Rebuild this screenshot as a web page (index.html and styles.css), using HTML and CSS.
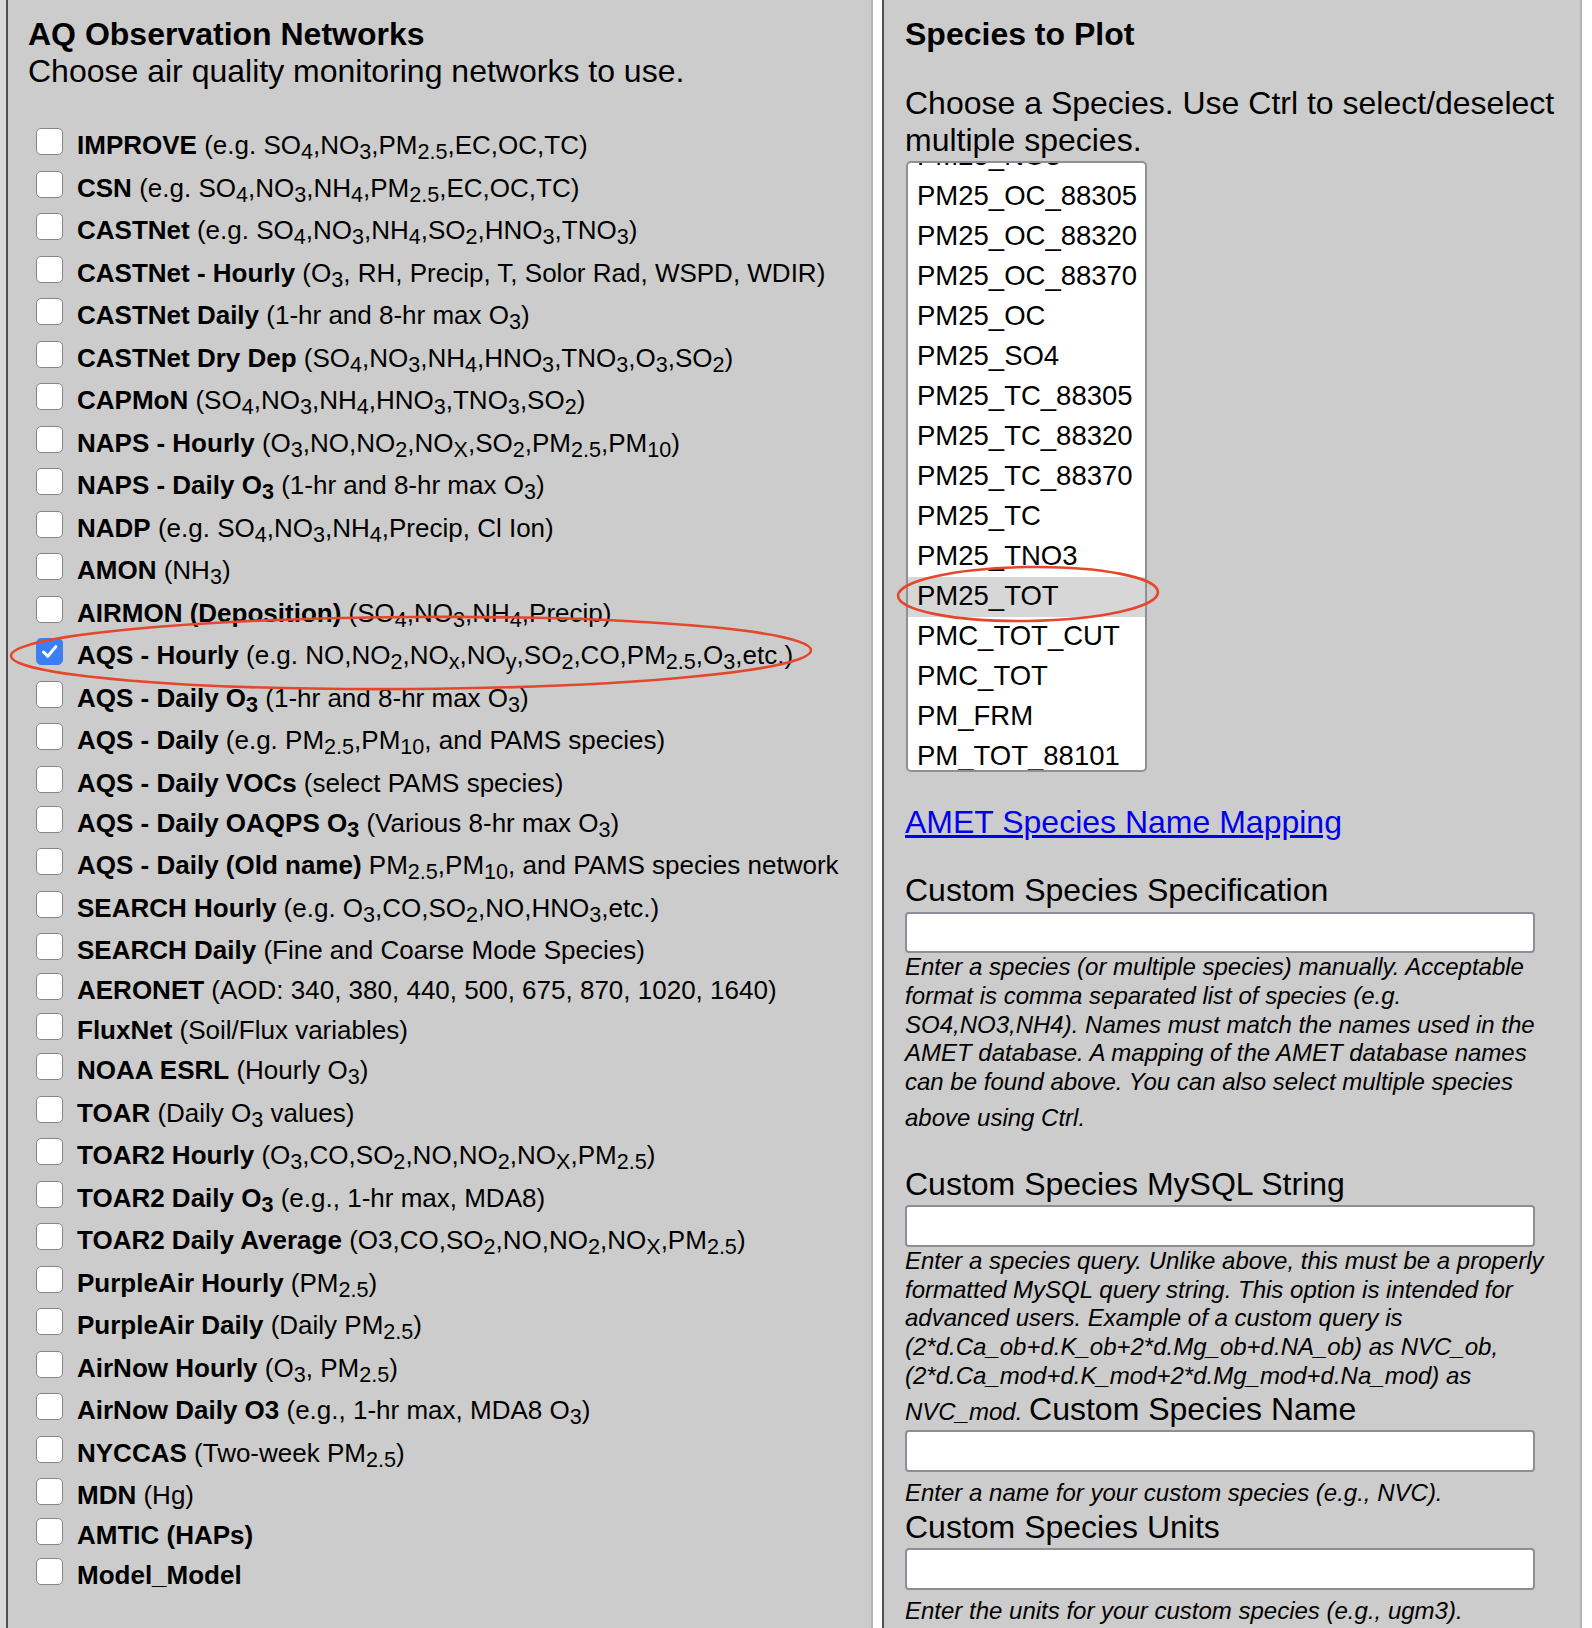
FILE: index.html
```html
<!DOCTYPE html>
<html lang="en">
<head>
    <meta charset="UTF-8">
    <title>AMET Query Generator - Networks and Species</title>
    <link rel="stylesheet" href="styles.css">
</head>
<body>
    <div class="page">
        <section class="panel networks">
            <h3 class="panel-title">AQ Observation Networks</h3>
            <p class="panel-lead">Choose air quality monitoring networks to use.</p>

            <div class="net-list">
                <label class="net"><span class="box"></span><b>IMPROVE</b> (e.g. SO<sub>4</sub>,NO<sub>3</sub>,PM<sub>2.5</sub>,EC,OC,TC)</label>
                <label class="net"><span class="box"></span><b>CSN</b> (e.g. SO<sub>4</sub>,NO<sub>3</sub>,NH<sub>4</sub>,PM<sub>2.5</sub>,EC,OC,TC)</label>
                <label class="net"><span class="box"></span><b>CASTNet</b> (e.g. SO<sub>4</sub>,NO<sub>3</sub>,NH<sub>4</sub>,SO<sub>2</sub>,HNO<sub>3</sub>,TNO<sub>3</sub>)</label>
                <label class="net"><span class="box"></span><b>CASTNet - Hourly</b> (O<sub>3</sub>, RH, Precip, T, Solor Rad, WSPD, WDIR)</label>
                <label class="net"><span class="box"></span><b>CASTNet Daily</b> (1-hr and 8-hr max O<sub>3</sub>)</label>
                <label class="net"><span class="box"></span><b>CASTNet Dry Dep</b> (SO<sub>4</sub>,NO<sub>3</sub>,NH<sub>4</sub>,HNO<sub>3</sub>,TNO<sub>3</sub>,O<sub>3</sub>,SO<sub>2</sub>)</label>
                <label class="net"><span class="box"></span><b>CAPMoN</b> (SO<sub>4</sub>,NO<sub>3</sub>,NH<sub>4</sub>,HNO<sub>3</sub>,TNO<sub>3</sub>,SO<sub>2</sub>)</label>
                <label class="net"><span class="box"></span><b>NAPS - Hourly</b> (O<sub>3</sub>,NO,NO<sub>2</sub>,NO<sub>X</sub>,SO<sub>2</sub>,PM<sub>2.5</sub>,PM<sub>10</sub>)</label>
                <label class="net"><span class="box"></span><b>NAPS - Daily O<sub>3</sub></b> (1-hr and 8-hr max O<sub>3</sub>)</label>
                <label class="net"><span class="box"></span><b>NADP</b> (e.g. SO<sub>4</sub>,NO<sub>3</sub>,NH<sub>4</sub>,Precip, Cl Ion)</label>
                <label class="net"><span class="box"></span><b>AMON</b> (NH<sub>3</sub>)</label>
                <label class="net"><span class="box"></span><b>AIRMON (Deposition)</b> (SO<sub>4</sub>,NO<sub>3</sub>,NH<sub>4</sub>,Precip)</label>
                <label class="net"><span class="box checked"><svg width="27" height="27" viewBox="0 0 27 27"><path d="M7.5 14 L11.8 18.3 L19.8 8.6" fill="none" stroke="#fff" stroke-width="3" stroke-linecap="round" stroke-linejoin="round"/></svg></span><b>AQS - Hourly</b> (e.g. NO,NO<sub>2</sub>,NO<sub>x</sub>,NO<sub>y</sub>,SO<sub>2</sub>,CO,PM<sub>2.5</sub>,O<sub>3</sub>,etc.)</label>
                <label class="net"><span class="box"></span><b>AQS - Daily O<sub>3</sub></b> (1-hr and 8-hr max O<sub>3</sub>)</label>
                <label class="net"><span class="box"></span><b>AQS - Daily</b> (e.g. PM<sub>2.5</sub>,PM<sub>10</sub>, and PAMS species)</label>
                <label class="net"><span class="box"></span><b>AQS - Daily VOCs</b> (select PAMS species)</label>
                <label class="net"><span class="box"></span><b>AQS - Daily OAQPS O<sub>3</sub></b> (Various 8-hr max O<sub>3</sub>)</label>
                <label class="net"><span class="box"></span><b>AQS - Daily (Old name)</b> PM<sub>2.5</sub>,PM<sub>10</sub>, and PAMS species network</label>
                <label class="net"><span class="box"></span><b>SEARCH Hourly</b> (e.g. O<sub>3</sub>,CO,SO<sub>2</sub>,NO,HNO<sub>3</sub>,etc.)</label>
                <label class="net"><span class="box"></span><b>SEARCH Daily</b> (Fine and Coarse Mode Species)</label>
                <label class="net"><span class="box"></span><b>AERONET</b> (AOD: 340, 380, 440, 500, 675, 870, 1020, 1640)</label>
                <label class="net"><span class="box"></span><b>FluxNet</b> (Soil/Flux variables)</label>
                <label class="net"><span class="box"></span><b>NOAA ESRL</b> (Hourly O<sub>3</sub>)</label>
                <label class="net"><span class="box"></span><b>TOAR</b> (Daily O<sub>3</sub> values)</label>
                <label class="net"><span class="box"></span><b>TOAR2 Hourly</b> (O<sub>3</sub>,CO,SO<sub>2</sub>,NO,NO<sub>2</sub>,NO<sub>X</sub>,PM<sub>2.5</sub>)</label>
                <label class="net"><span class="box"></span><b>TOAR2 Daily O<sub>3</sub></b> (e.g., 1-hr max, MDA8)</label>
                <label class="net"><span class="box"></span><b>TOAR2 Daily Average</b> (O3,CO,SO<sub>2</sub>,NO,NO<sub>2</sub>,NO<sub>X</sub>,PM<sub>2.5</sub>)</label>
                <label class="net"><span class="box"></span><b>PurpleAir Hourly</b> (PM<sub>2.5</sub>)</label>
                <label class="net"><span class="box"></span><b>PurpleAir Daily</b> (Daily PM<sub>2.5</sub>)</label>
                <label class="net"><span class="box"></span><b>AirNow Hourly</b> (O<sub>3</sub>, PM<sub>2.5</sub>)</label>
                <label class="net"><span class="box"></span><b>AirNow Daily O3</b> (e.g., 1-hr max, MDA8 O<sub>3</sub>)</label>
                <label class="net"><span class="box"></span><b>NYCCAS</b> (Two-week PM<sub>2.5</sub>)</label>
                <label class="net"><span class="box"></span><b>MDN</b> (Hg)</label>
                <label class="net"><span class="box"></span><b>AMTIC (HAPs)</b></label>
                <label class="net"><span class="box"></span><b>Model_Model</b></label>
            </div>
        </section>

        <section class="panel species">
            <h3 class="panel-title">Species to Plot</h3>
            <p class="species-intro">Choose a Species. Use Ctrl to select/deselect multiple species.</p>

            <div class="listbox">
                <div class="listbox-inner">
                    <div class="option">PM25_NO3</div>
                    <div class="option">PM25_OC_88305</div>
                    <div class="option">PM25_OC_88320</div>
                    <div class="option">PM25_OC_88370</div>
                    <div class="option">PM25_OC</div>
                    <div class="option">PM25_SO4</div>
                    <div class="option">PM25_TC_88305</div>
                    <div class="option">PM25_TC_88320</div>
                    <div class="option">PM25_TC_88370</div>
                    <div class="option">PM25_TC</div>
                    <div class="option">PM25_TNO3</div>
                    <div class="option selected">PM25_TOT</div>
                    <div class="option">PMC_TOT_CUT</div>
                    <div class="option">PMC_TOT</div>
                    <div class="option">PM_FRM</div>
                    <div class="option">PM_TOT_88101</div>
                </div>
            </div>

            <p class="map"><a href="#">AMET Species Name Mapping</a></p>

            <label class="field-label" for="custom_spec">Custom Species Specification</label>
            <input class="text-field" id="custom_spec" type="text">
            <p class="note">Enter a species (or multiple species) manually. Acceptable format is comma separated list of species (e.g. SO4,NO3,NH4). Names must match the names used in the AMET database. A mapping of the AMET database names can be found above. You can also select multiple species above using Ctrl.</p>

            <label class="field-label spaced" for="custom_query">Custom Species MySQL String</label>
            <input class="text-field" id="custom_query" type="text">
            <p class="note">Enter a species query. Unlike above, this must be a properly formatted MySQL query string. This option is intended for advanced users. Example of a custom query is (2*d.Ca_ob+d.K_ob+2*d.Mg_ob+d.NA_ob) as NVC_ob, (2*d.Ca_mod+d.K_mod+2*d.Mg_mod+d.Na_mod) as NVC_mod.&nbsp;<label class="inline-label" for="custom_name">Custom Species Name</label></p>
            <input class="text-field" id="custom_name" type="text">
            <p class="note">Enter a name for your custom species (e.g., NVC).</p>

            <label class="field-label" for="custom_units">Custom Species Units</label>
            <input class="text-field" id="custom_units" type="text">
            <p class="note">Enter the units for your custom species (e.g., ugm3).</p>
        </section>
    </div>

    <!-- hand drawn highlight marks -->
    <svg class="marks" width="1592" height="1628" viewBox="0 0 1592 1628">
        <ellipse cx="411" cy="653" rx="400" ry="36" transform="rotate(-0.4 411 653)" fill="none" stroke="#e5472c" stroke-width="2.6"/>
        <ellipse cx="1028" cy="594" rx="130" ry="27" transform="rotate(-0.8 1028 594)" fill="none" stroke="#e5472c" stroke-width="2.6"/>
    </svg>
</body>
</html>
```

FILE: styles.css
```css
* {
    box-sizing: border-box;
}

html,
body {
    margin: 0;
    overflow: hidden;
}

body {
    position: relative;
    font-family: "Liberation Sans", Arial, Helvetica, sans-serif;
    color: #000;
    background: #fff;
}

.page {
    display: flex;
    gap: 9px;
    height: 1628px;
    border-left: 6px solid #d9d9d9;
}

.panel {
    background: #ccc;
    border-left: 2px solid #505050;
    border-right: 2px solid #b4b4b4;
    padding-top: 16px;
}

.networks {
    flex: 0 0 867px;
    padding-left: 20px;
}

.species {
    flex: 0 0 700px;
    padding-left: 21px;
    padding-right: 19px;
}

.panel-title {
    margin: 0;
    font-size: 32px;
    font-weight: bold;
    line-height: normal;
}

.panel-lead {
    margin: 0;
    font-size: 32px;
    line-height: normal;
}

/* network checkboxes */
.net-list {
    margin-top: 34px;
}

.net {
    display: block;
    font-size: 26px;
    line-height: 28px;
    padding: 4px 0 5px;
    white-space: nowrap;
}

.box {
    display: inline-block;
    width: 27px;
    height: 27px;
    margin: 0 14px 0 8px;
    vertical-align: -1px;
    background: #fff;
    border: 1.5px solid #85858f;
    border-radius: 5px;
}

.box.checked {
    background: #3b7ff4;
    border-color: #3b7ff4;
}

.box svg {
    display: block;
    margin: -1.5px;
}

sub {
    font-size: 0.83em;
    vertical-align: -5px;
    line-height: 19.5px;
}

/* species */
.species-intro {
    margin: 32px 0 0;
    font-size: 32px;
    line-height: normal;
}

.listbox {
    margin: 2px 0 0 1px;
    width: 241px;
    height: 611px;
    background: #fff;
    border: 2px solid #8f8f96;
    border-radius: 5px;
    overflow: hidden;
}

.listbox-inner {
    margin-top: -26px;
}

.option {
    height: 40px;
    line-height: 38px;
    padding: 0 9px;
    font-size: 27.5px;
    white-space: nowrap;
}

.option.selected {
    background: #d7d7d7;
}

.map {
    margin: 32px 0 0;
    font-size: 32px;
    line-height: normal;
}

.map a {
    color: #0000ee;
}

.field-label {
    display: block;
    margin-top: 31px;
    font-size: 32px;
    line-height: normal;
}

.note + .field-label {
    margin-top: 0;
}

.note + .field-label.spaced {
    margin-top: 32px;
}

.text-field {
    display: block;
    width: 630px;
    height: 41.5px;
    margin: 2.6px 0 0;
    background: #fff;
    border: 2px solid #8e8e98;
    border-radius: 4px;
    font: inherit;
}

.note {
    margin: 0;
    font-size: 24px;
    font-style: italic;
    line-height: 28.75px;
}

.note::after {
    content: "\200B";
    font-size: 32px;
    font-style: normal;
    line-height: normal;
}

.inline-label {
    font-size: 32px;
    font-style: normal;
    line-height: normal;
}

.marks {
    position: absolute;
    left: 0;
    top: 0;
    pointer-events: none;
}
```
